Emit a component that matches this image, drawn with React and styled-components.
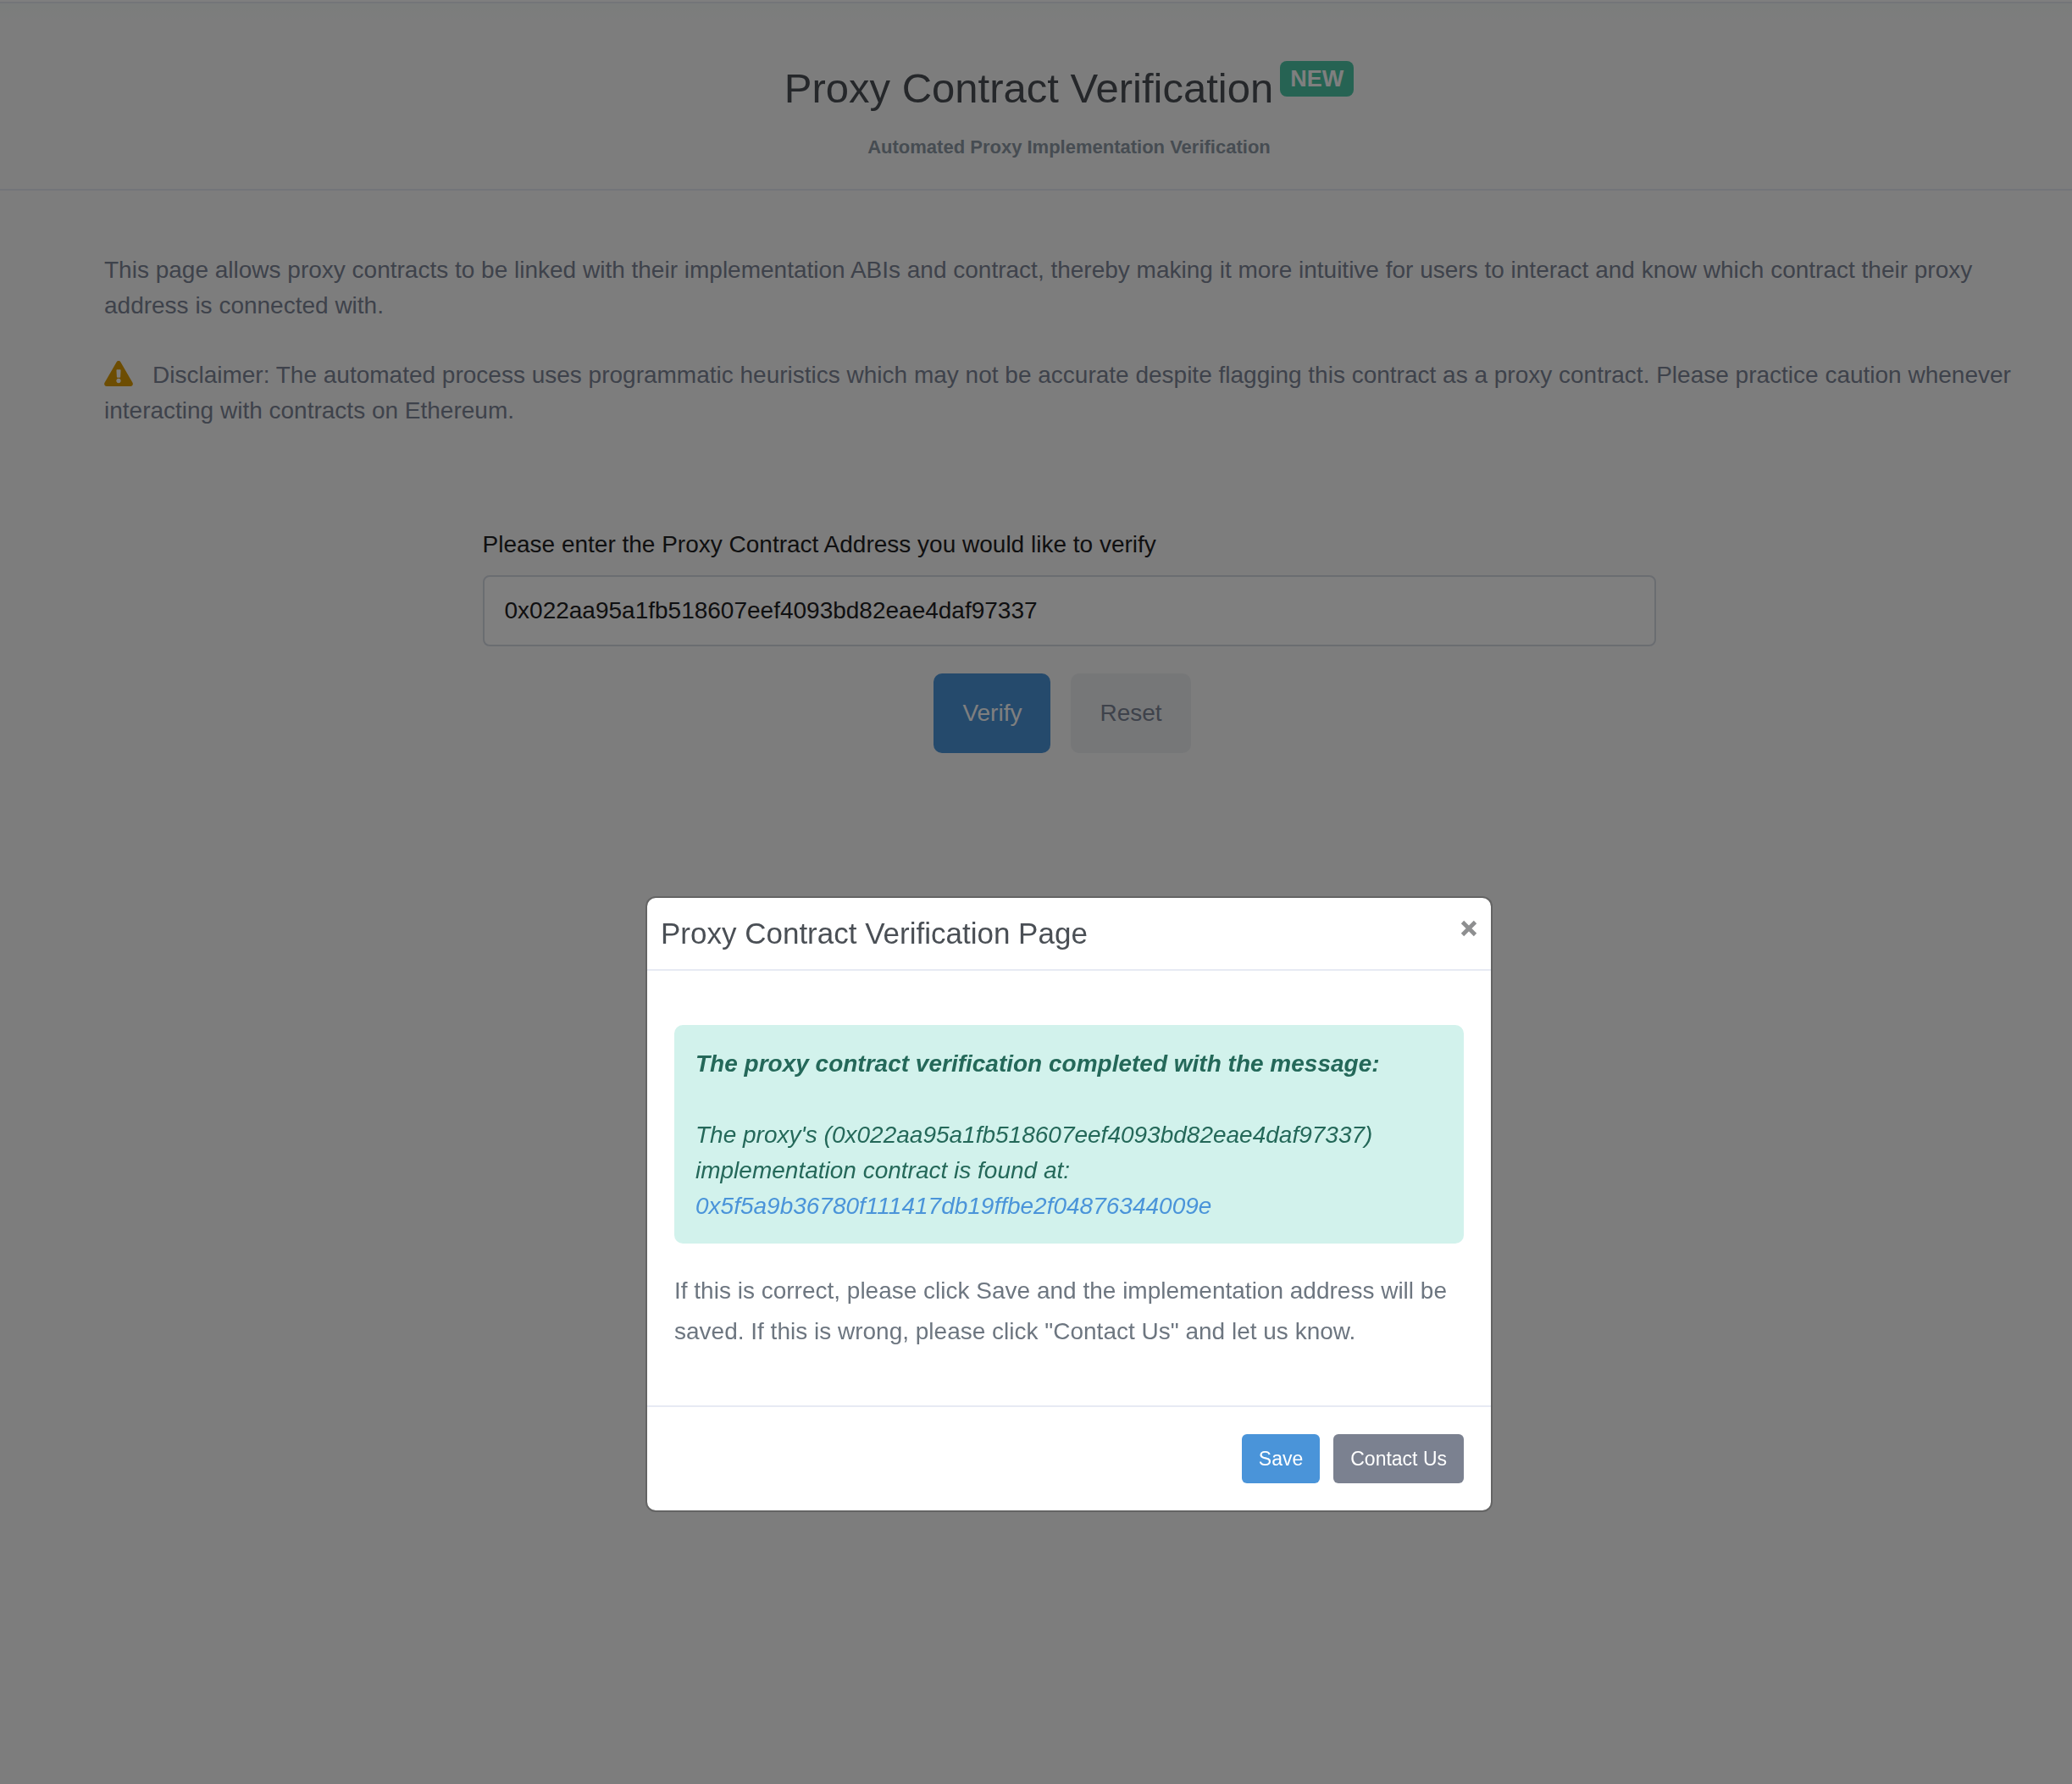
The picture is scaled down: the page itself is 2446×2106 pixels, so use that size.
import React, { useState } from "react";
import styled, { createGlobalStyle, css } from "styled-components";
import { FaExclamationTriangle } from "react-icons/fa";

const GlobalStyle = createGlobalStyle`
  *, *::before, *::after { box-sizing: border-box; }
  body {
    margin: 0;
    background: #fbfbfb;
    color: #7d8596;
    font: 28px/42px "Liberation Sans", Arial, sans-serif;
  }
  h1, h2, p { margin: 0; font-weight: 400; }
`;

const Page = styled.div`
  min-height: 100vh;
`;

const TopBar = styled.div`
  height: 4px;
  background: #ffffff;
  border-bottom: 2px solid #e7eaf3;
`;

const Header = styled.header`
  display: flex;
  flex-direction: column;
  align-items: center;
  padding: 68px 45px 33px 123px;
  border-bottom: 2px solid #e7eaf3;
  background: linear-gradient(#f6fbf8, #fbfbfb 24px);
`;

const TitleRow = styled.div`
  display: flex;
  align-items: flex-start;
  gap: 8px;
`;

const Title = styled.h1`
  padding-top: 4px;
  color: #4a4f55;
  font-size: 49px;
  line-height: 56px;
`;

const Badge = styled.span`
  padding: 0 12px;
  border-radius: 8px;
  background: #4dc7a6;
  color: #ffffff;
  font-size: 27px;
  font-weight: 700;
  line-height: 42px;
`;

const Subtitle = styled.p`
  margin-top: 26px;
  color: #8c98a4;
  font-size: 22px;
  font-weight: 700;
  line-height: 32px;
`;

const Content = styled.main`
  display: flex;
  flex-direction: column;
  padding: 73px 45px 0 123px;
`;

const Intro = styled.p`
  margin-bottom: 40px;
`;

const WarningIcon = styled(FaExclamationTriangle)`
  width: 34px;
  height: 30px;
  margin-right: 23px;
  color: #db9a04;
  vertical-align: -4px;
`;

const Form = styled.form`
  display: flex;
  flex-direction: column;
  align-self: center;
  width: 100%;
  max-width: 1385px;
  margin-top: 116px;
`;

const Label = styled.label`
  margin-bottom: 15px;
  color: #1e2022;
`;

const AddressInput = styled.input`
  height: 84px;
  padding: 0 24px;
  border: 2px solid #d5dae2;
  border-radius: 8px;
  background: #ffffff;
  color: #1e2022;
  font: inherit;
`;

const Actions = styled.div`
  display: flex;
  justify-content: center;
  gap: 24px;
  margin-top: 32px;
  padding-right: 16px;
`;

const tones = {
  primary: css`background: #4a94d9; color: #ffffff;`,
  soft: css`background: #eceef1; color: #7d8596;`,
  secondary: css`background: #7b8190; color: #ffffff;`,
};

const Button = styled.button`
  height: ${(p) => (p.$small ? 58 : 94)}px;
  padding: 0 ${(p) => (p.$small ? 20 : 34)}px;
  border: 0;
  border-radius: ${(p) => (p.$small ? 6 : 10)}px;
  font: inherit;
  font-size: ${(p) => (p.$small ? 23 : 28)}px;
  cursor: pointer;
  ${(p) => tones[p.$tone]}
`;

const Backdrop = styled.div`
  position: fixed;
  inset: 0;
  display: flex;
  justify-content: center;
  align-items: flex-start;
  padding: 1058px 45px 0 123px;
  background: rgba(0, 0, 0, 0.5);
`;

const Dialog = styled.div`
  width: 100%;
  max-width: 1000px;
  border: 2px solid rgba(0, 0, 0, 0.2);
  border-radius: 12px;
  background: #ffffff;
  background-clip: padding-box;
`;

const DialogHeader = styled.div`
  display: flex;
  justify-content: space-between;
  align-items: flex-start;
  padding: 16px;
  border-bottom: 2px solid #e7eaf3;
`;

const DialogTitle = styled.h2`
  color: #4a4f55;
  font-size: 35px;
  line-height: 52px;
`;

const CloseButton = styled.button`
  display: flex;
  padding: 10px 0;
  border: 0;
  background: none;
  color: #8e8f90;
  cursor: pointer;
`;

const DialogBody = styled.div`
  padding: 64px 32px 63px;
`;

const Alert = styled.div`
  margin-bottom: 32px;
  padding: 25px 25px 23px;
  border-radius: 10px;
  background: #d2f2ec;
  color: #246859;
  font-style: italic;
`;

const AlertHeading = styled.strong`
  display: block;
  margin-bottom: 42px;
`;

const AddressLink = styled.a`
  display: block;
  color: #4a94d9;
  text-decoration: none;
`;

const Note = styled.p`
  color: #6d7680;
  line-height: 48px;
`;

const DialogFooter = styled.div`
  display: flex;
  justify-content: flex-end;
  gap: 16px;
  padding: 32px;
  border-top: 2px solid #e7eaf3;
`;

const PROXY = "0x022aa95a1fb518607eef4093bd82eae4daf97337";
const IMPLEMENTATION = "0x5f5a9b36780f111417db19ffbe2f04876344009e";

export default function App() {
  const [address, setAddress] = useState(PROXY);
  const [open, setOpen] = useState(true);

  return (
    <Page>
      <GlobalStyle />
      <TopBar />
      <Header>
        <TitleRow>
          <Title>Proxy Contract Verification</Title>
          <Badge>NEW</Badge>
        </TitleRow>
        <Subtitle>Automated Proxy Implementation Verification</Subtitle>
      </Header>
      <Content>
        <Intro>
          This page allows proxy contracts to be linked with their implementation ABIs and contract,
          thereby making it more intuitive for users to interact and know which contract their proxy
          address is connected with.
        </Intro>
        <p>
          <WarningIcon aria-hidden="true" />
          Disclaimer: The automated process uses programmatic heuristics which may not be accurate
          despite flagging this contract as a proxy contract. Please practice caution whenever
          interacting with contracts on Ethereum.
        </p>
        <Form onSubmit={(e) => { e.preventDefault(); setOpen(true); }}>
          <Label htmlFor="address">Please enter the Proxy Contract Address you would like to verify</Label>
          <AddressInput id="address" type="text" value={address} onChange={(e) => setAddress(e.target.value)} />
          <Actions>
            <Button type="submit" $tone="primary">Verify</Button>
            <Button type="button" $tone="soft" onClick={() => setAddress("")}>Reset</Button>
          </Actions>
        </Form>
      </Content>
      {open && (
        <Backdrop>
          <Dialog role="dialog" aria-modal="true" aria-labelledby="dialog-title">
            <DialogHeader>
              <DialogTitle id="dialog-title">Proxy Contract Verification Page</DialogTitle>
              <CloseButton type="button" aria-label="Close" onClick={() => setOpen(false)}>
                <svg width="20" height="20" viewBox="0 0 20 20" aria-hidden="true">
                  <path d="M2.5 2.5L17.5 17.5M17.5 2.5L2.5 17.5" stroke="currentColor" strokeWidth="4.8" />
                </svg>
              </CloseButton>
            </DialogHeader>
            <DialogBody>
              <Alert>
                <AlertHeading>The proxy contract verification completed with the message:</AlertHeading>
                <span>{`The proxy's (${PROXY}) implementation contract is found at:`}</span>
                <AddressLink href={`#${IMPLEMENTATION}`}>{IMPLEMENTATION}</AddressLink>
              </Alert>
              <Note>
                If this is correct, please click Save and the implementation address will be saved. If
                this is wrong, please click "Contact Us" and let us know.
              </Note>
            </DialogBody>
            <DialogFooter>
              <Button type="button" $tone="primary" $small>Save</Button>
              <Button type="button" $tone="secondary" $small>Contact Us</Button>
            </DialogFooter>
          </Dialog>
        </Backdrop>
      )}
    </Page>
  );
}
